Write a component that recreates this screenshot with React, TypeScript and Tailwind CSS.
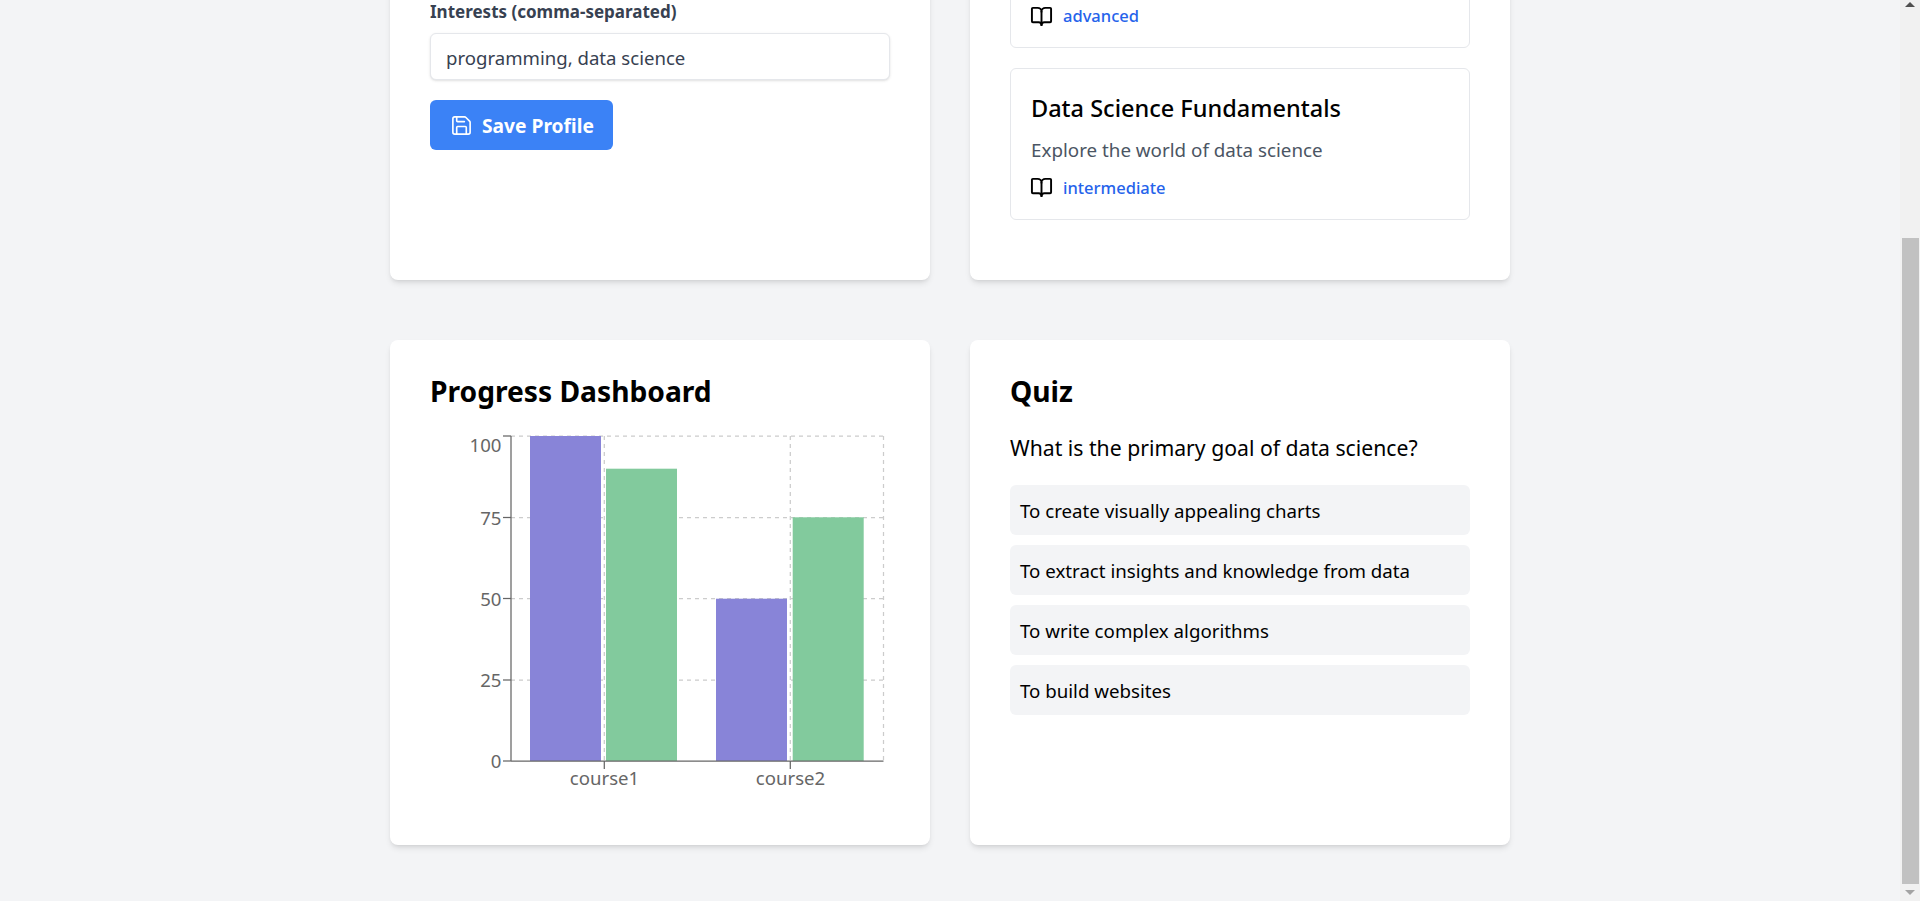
import { BookOpen, Save } from "lucide-react";

const quizOptions = [
  "To create visually appealing charts",
  "To extract insights and knowledge from data",
  "To write complex algorithms",
  "To build websites",
];

const yTicks = [
  { label: "100", y: 1, textY: 17 },
  { label: "75", y: 82.5, textY: 90 },
  { label: "50", y: 163.5, textY: 171 },
  { label: "25", y: 245, textY: 252 },
  { label: "0", y: 326, textY: 333 },
];

// origin of the chart svg is (420, 435) on the page
const bars = [
  { x: 110, w: 71, y: 1, fill: "#8884d8" },
  { x: 186, w: 71, y: 33.7, fill: "#82ca9d" },
  { x: 296, w: 71, y: 163.7, fill: "#8884d8" },
  { x: 372.7, w: 71, y: 82.3, fill: "#82ca9d" },
];

const ProgressChart = () => (
  <svg width="470" height="365" viewBox="0 0 470 365" className="block">
    <g stroke="#ccc" strokeWidth="1.25" strokeDasharray="4 4" fill="none">
      {yTicks.slice(0, 4).map((t) => (
        <line key={t.label} x1="91" x2="463.5" y1={t.y} y2={t.y} />
      ))}
      <line x1="184.3" x2="184.3" y1="1" y2="326" />
      <line x1="370.3" x2="370.3" y1="1" y2="326" />
      <line x1="463.5" x2="463.5" y1="1" y2="326" />
    </g>
    {bars.map((b) => (
      <rect key={b.x} x={b.x} y={b.y} width={b.w} height={326 - b.y} fill={b.fill} />
    ))}
    <g stroke="#666" strokeWidth="1.25">
      <line x1="91" x2="91" y1="1" y2="326" />
      <line x1="91" x2="463.5" y1="326" y2="326" />
      {yTicks.map((t) => (
        <line key={t.label} x1="83" x2="91" y1={t.y} y2={t.y} />
      ))}
      <line x1="184.3" x2="184.3" y1="326" y2="334" />
      <line x1="370.3" x2="370.3" y1="326" y2="334" />
    </g>
    <g fill="#666" fontSize="18.6">
      {yTicks.map((t) => (
        <text key={t.label} x="81.5" y={t.textY} textAnchor="end">
          {t.label}
        </text>
      ))}
      <text x="184.5" y="350" textAnchor="middle">
        course1
      </text>
      <text x="370.5" y="350" textAnchor="middle">
        course2
      </text>
    </g>
  </svg>
);

const Scrollbar = () => (
  <div className="flex h-full w-[20px] shrink-0 flex-col items-center bg-[#f1f1f1]">
    <div className="h-[238px] w-full pt-[2px]">
      <div className="mx-auto h-0 w-0 border-x-[5px] border-b-[5px] border-x-transparent border-b-[#505050]" />
    </div>
    <div className="h-[646px] w-[17px] bg-[#c1c1c1]" />
    <div className="w-full pt-[6px]">
      <div className="mx-auto h-0 w-0 border-x-[5px] border-t-[5px] border-x-transparent border-t-[#a3a3a3]" />
    </div>
  </div>
);

export default function App() {
  return (
    <div className="flex h-screen w-full overflow-hidden bg-[#f3f4f6] font-['Noto_Sans',sans-serif]">
      <main className="flex h-full min-w-0 flex-1 flex-col items-center justify-end pb-[56px]">
        <div className="grid w-[1120px] shrink-0 grid-cols-2 grid-rows-[340px_505px] gap-x-10 gap-y-[60px]">
          <section className="flex flex-col justify-end rounded-lg bg-white px-10 pb-[130px] shadow-md">
            <label className="mb-[9px] block text-[17px] leading-6 font-bold text-[#374151]">
              Interests (comma-separated)
            </label>
            <input
              readOnly
              value="programming, data science"
              className="h-[47px] w-full rounded-md border border-gray-200 bg-white px-[15px] pt-[2px] text-[18.6px] text-[#374151] shadow-sm outline-none"
            />
            <button className="mt-5 flex h-[50px] w-[183px] items-center gap-[9px] rounded-md bg-[#3b82f6] pl-[20px] text-[19.2px] font-bold text-white">
              <Save size={23} strokeWidth={1.7} />
              <span className="pt-[2px]">Save Profile</span>
            </button>
          </section>

          <section className="flex flex-col justify-end gap-5 rounded-lg bg-white px-10 pb-[60px] shadow-md">
            <div className="flex h-[150px] shrink-0 items-end gap-[10px] rounded-md border border-gray-200 pr-5 pb-[19px] pl-[19px]">
              <BookOpen size={23} strokeWidth={2} className="text-black" />
              <span className="text-[16.5px] leading-6 font-medium text-[#2563eb]">advanced</span>
            </div>
            <div className="h-[152px] shrink-0 rounded-md border border-gray-200 px-5 pt-5">
              <h3 className="text-[23.5px] leading-[38px] font-medium text-black">Data Science Fundamentals</h3>
              <p className="mt-[11px] text-[18.8px] leading-6 text-[#4b5563]">Explore the world of data science</p>
              <div className="mt-[13px] -ml-[1px] flex items-center gap-[10px]">
                <BookOpen size={23} strokeWidth={2} className="text-black" />
                <span className="pt-[1px] text-[16.5px] leading-6 font-medium text-[#2563eb]">intermediate</span>
              </div>
            </div>
          </section>

          <section className="rounded-lg bg-white px-10 pt-[30px] shadow-md">
            <h2 className="text-[28.2px] leading-[42px] font-bold text-black">Progress Dashboard</h2>
            <div className="mt-[23px] -ml-[10px]">
              <ProgressChart />
            </div>
          </section>

          <section className="rounded-lg bg-white px-10 pt-[30px] shadow-md">
            <h2 className="text-[28.2px] leading-[42px] font-bold text-black">Quiz</h2>
            <p className="mt-[20px] text-[21.2px] leading-8 text-black">What is the primary goal of data science?</p>
            <div className="mt-[21px] flex flex-col gap-[10px]">
              {quizOptions.map((option) => (
                <div
                  key={option}
                  className="flex h-[50px] items-center rounded-md bg-[#f3f4f6] px-[10px] pt-[3px] text-[18.7px] text-black"
                >
                  {option}
                </div>
              ))}
            </div>
          </section>
        </div>
      </main>
      <Scrollbar />
    </div>
  );
}
